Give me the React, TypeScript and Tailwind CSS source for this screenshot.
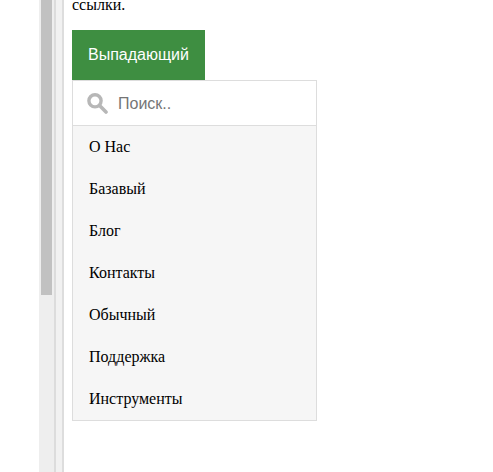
const links = ["О Нас", "Базавый", "Блог", "Контакты", "Обычный", "Поддержка", "Инструменты"];

export default function App() {
  return (
    <div className="flex h-[472px] w-full overflow-hidden bg-white font-['Liberation_Serif','Times_New_Roman',serif] text-base leading-[18px] text-black">
      <div className="ml-[39px] w-[15px] shrink-0 bg-[#eeeeee] pl-[2px]">
        <div className="h-[295px] w-[11px] bg-[#c1c1c1]" />
      </div>
      <div className="w-[10px] shrink-0 border-x-2 border-l-[#dcdcdc] border-r-[#dddddd] bg-[#f1f1f1]" />
      <main className="ml-2 w-[245px]">
        <p className="-mt-[4px] h-[34px]">ссылки.</p>
        <button className="block h-[50px] w-[133px] bg-[#3e8e41] text-center font-['Liberation_Sans',Arial,sans-serif] text-base text-white">
          Выпадающий
        </button>
        <div className="border border-[#dddddd] bg-[#f6f6f6]">
          <div className="flex h-[45px] items-center border-b border-[#dddddd] bg-white pl-[14px]">
            <svg className="mt-px" width="21" height="21" viewBox="0 0 21 21" fill="none" stroke="#b7b7b7" aria-hidden="true">
              <circle cx="8" cy="7.8" r="6.1" strokeWidth="3.4" />
              <path d="M12.8 12.8L19 19" strokeWidth="3.6" strokeLinecap="round" />
            </svg>
            <input
              type="text"
              placeholder="Поиск.."
              className="ml-[10px] mt-[2px] w-[180px] bg-transparent font-['Liberation_Sans',Arial,sans-serif] text-base text-black outline-none placeholder:text-[#757575]"
            />
          </div>
          {links.map((label) => (
            <a key={label} href="#" className="block px-4 py-3">
              {label}
            </a>
          ))}
        </div>
      </main>
    </div>
  );
}
